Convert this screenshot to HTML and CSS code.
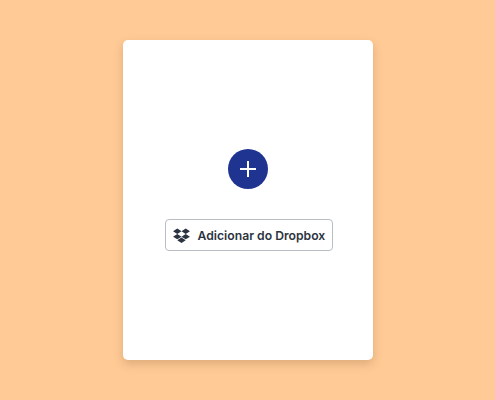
FILE: index.html
```html
<!DOCTYPE html>
<html lang="pt-br">
<head>
    <meta charset="UTF-8">
    <meta name="viewport" content="width=device-width, initial-scale=1.0">
    <title>Adicionar arquivos</title>
    <link rel="stylesheet" href="styles.css">
</head>
<body>

    <div class="upload-card">
        <button class="add-button" aria-label="Adicionar">
            <svg width="16" height="16" viewBox="0 0 16 16">
                <path d="M8 0v16M0 8h16" stroke="#fff" stroke-width="2" fill="none"/>
            </svg>
        </button>
        <button class="dropbox-button">
            <svg class="dropbox-icon" width="17" height="15" viewBox="0 0 18 16">
                <path d="M4.5 0.5 0 3.4l4.5 2.9L9 3.4zM13.5 0.5 9 3.4l4.5 2.9L18 3.4zM0 9.2l4.5 2.9L9 9.2 4.5 6.3zM13.5 6.3 9 9.2l4.5 2.9L18 9.2zM4.5 13l4.5 2.9 4.5-2.9L9 10.1z" fill="#2b3440"/>
            </svg>
            Adicionar do Dropbox
        </button>
    </div>

</body>
</html>
```

FILE: styles.css
```css
* {
    margin: 0;
    padding: 0;
    box-sizing: border-box;
}

body {
    font-family: 'Inter', 'Liberation Sans', sans-serif;
    background-color: #ffca96;
    height: 400px;
    display: flex;
    justify-content: center;
    align-items: center;
    overflow: hidden;
}

/* Cartão central */
.upload-card {
    background-color: #fff;
    width: 250px;
    height: 320px;
    border-radius: 5px;
    box-shadow: 0 4px 10px rgba(120, 80, 40, 0.25);
    display: flex;
    flex-direction: column;
    align-items: center;
    padding-top: 109px;
}

.add-button {
    width: 40px;
    height: 40px;
    border: none;
    border-radius: 50%;
    background-color: #1f3491;
    display: flex;
    justify-content: center;
    align-items: center;
    margin-bottom: 30px;
}

.dropbox-button {
    width: 168px;
    height: 32px;
    margin-left: 2px;
    background-color: #fff;
    border: 1px solid #b9bdc4;
    border-radius: 4px;
    color: #2b3440;
    font-family: inherit;
    font-size: 12.2px;
    font-weight: 600;
    display: flex;
    align-items: center;
    gap: 8px;
    padding-left: 7px;
    white-space: nowrap;
}

.dropbox-icon {
    flex-shrink: 0;
}
```
